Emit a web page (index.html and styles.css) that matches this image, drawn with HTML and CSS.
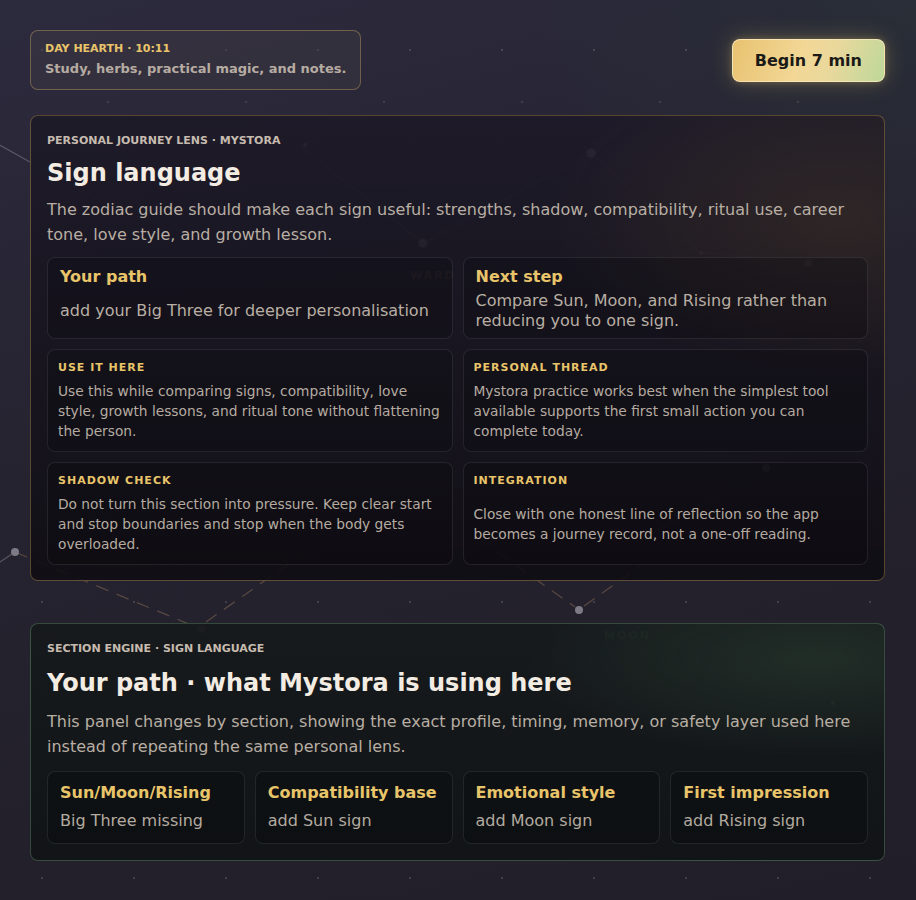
FILE: index.html
```html
<!DOCTYPE html>
<html lang="en">
<head>
<meta charset="utf-8">
<title>Mystora · Sign language</title>
<link rel="stylesheet" href="styles.css">
</head>
<body>
<div class="sky" aria-hidden="true">
  <svg class="sky-svg" width="916" height="900" viewBox="0 0 916 900">
    <g class="sky-lines">
      <line x1="-6" y1="142" x2="30" y2="162"/>
      <line class="faint" x1="30" y1="162" x2="120" y2="212"/>
      <line class="faint" x1="300" y1="146" x2="423" y2="243"/>
      <line class="faint" x1="423" y1="243" x2="591" y2="153"/>
      <line class="faint" x1="591" y1="153" x2="700" y2="252"/>
      <line class="faint" x1="700" y1="252" x2="808" y2="263"/>
      <line class="faint" x1="766" y1="468" x2="640" y2="540"/>
      <line x1="-6" y1="566" x2="15" y2="552"/>
      <line class="dash" x1="15" y1="552" x2="196" y2="627"/>
      <line class="dash" x1="206" y1="622" x2="300" y2="556"/>
      <line class="dash" x1="480" y1="540" x2="575" y2="607"/>
      <line class="dash" x1="584" y1="606" x2="640" y2="566"/>
    </g>
    <g class="sky-nodes">
      <circle cx="15" cy="552" r="4"/>
      <circle cx="201" cy="629" r="4" class="dim"/>
      <circle cx="579" cy="610" r="4"/>
      <circle cx="423" cy="243" r="4.5"/>
      <circle cx="591" cy="153" r="4.5"/>
      <circle cx="808" cy="263" r="4"/>
      <circle cx="766" cy="468" r="4"/>
      <circle cx="305" cy="145" r="2"/>
      <circle cx="701" cy="253" r="1.8" class="gold"/>
      <circle cx="833" cy="703" r="2" class="bright"/>
    </g>
    <text class="sky-word" x="410" y="279">WARD</text>
    <text class="sky-word sky-word-green" x="604" y="639">MOON</text>
  </svg>
</div>

<main class="page">
  <header class="topbar">
    <div class="hearth">
      <div class="hearth-label">DAY HEARTH · 10:11</div>
      <div class="hearth-text">Study, herbs, practical magic, and notes.</div>
    </div>
    <button class="begin" type="button">Begin 7 min</button>
  </header>

  <section class="panel panel-lens">
    <div class="eyebrow">PERSONAL JOURNEY LENS · MYSTORA</div>
    <h1 class="panel-title">Sign language</h1>
    <p class="panel-lead">The zodiac guide should make each sign useful: strengths, shadow, compatibility, ritual use, career tone, love style, and growth lesson.</p>

    <div class="grid-two">
      <div class="card card-big">
        <div class="card-title">Your path</div>
        <div class="card-value">add your Big Three for deeper personalisation</div>
      </div>
      <div class="card card-big">
        <div class="card-title">Next step</div>
        <div class="card-value">Compare Sun, Moon, and Rising rather than reducing you to one sign.</div>
      </div>
      <div class="card card-note">
        <div class="note-label">USE IT HERE</div>
        <div class="note-text">Use this while comparing signs, compatibility, love style, growth lessons, and ritual tone without flattening the person.</div>
      </div>
      <div class="card card-note">
        <div class="note-label">PERSONAL THREAD</div>
        <div class="note-text">Mystora practice works best when the simplest tool available supports the first small action you can complete today.</div>
      </div>
      <div class="card card-note">
        <div class="note-label">SHADOW CHECK</div>
        <div class="note-text">Do not turn this section into pressure. Keep clear start and stop boundaries and stop when the body gets overloaded.</div>
      </div>
      <div class="card card-note">
        <div class="note-label">INTEGRATION</div>
        <div class="note-text">Close with one honest line of reflection so the app becomes a journey record, not a one-off reading.</div>
      </div>
    </div>
  </section>

  <section class="panel panel-engine">
    <div class="eyebrow">SECTION ENGINE · SIGN LANGUAGE</div>
    <h2 class="panel-title">Your path · what Mystora is using here</h2>
    <p class="panel-lead">This panel changes by section, showing the exact profile, timing, memory, or safety layer used here instead of repeating the same personal lens.</p>

    <div class="grid-four">
      <div class="card card-small">
        <div class="card-title">Sun/Moon/Rising</div>
        <div class="small-value">Big Three missing</div>
      </div>
      <div class="card card-small">
        <div class="card-title">Compatibility base</div>
        <div class="small-value">add Sun sign</div>
      </div>
      <div class="card card-small">
        <div class="card-title">Emotional style</div>
        <div class="small-value">add Moon sign</div>
      </div>
      <div class="card card-small">
        <div class="card-title">First impression</div>
        <div class="small-value">add Rising sign</div>
      </div>
    </div>
  </section>
</main>
</body>
</html>
```

FILE: styles.css
```css
* {
  box-sizing: border-box;
}

html {
  min-height: 100%;
  background: #23212c;
}

body {
  margin: 0;
  min-height: 900px;
  position: relative;
  font-family: "DejaVu Sans", Verdana, sans-serif;
  color: #b9afa4;
  background:
    radial-gradient(circle, rgba(255, 255, 255, 0.13) 0, rgba(255, 255, 255, 0.13) 1px, transparent 1.6px) -4px 4px / 92px 92px,
    radial-gradient(circle, rgba(255, 255, 255, 0.10) 0, rgba(255, 255, 255, 0.10) 1px, transparent 1.6px) 39px 33px / 138px 138px,
    radial-gradient(ellipse 60% 40% at 100% 0%, rgba(40, 52, 56, 0.55), transparent 70%),
    linear-gradient(165deg, #2c2a3d 0%, #25232f 45%, #211e29 100%);
}

.sky {
  position: absolute;
  left: 0;
  top: 0;
  width: 916px;
  height: 900px;
  z-index: 0;
  pointer-events: none;
}

.sky-svg {
  display: block;
}

.sky-lines line {
  stroke: rgba(150, 140, 150, 0.45);
  stroke-width: 1.3;
}

.sky-lines line.faint {
  stroke: rgba(150, 140, 150, 0.22);
}

.sky-lines line.dash {
  stroke: rgba(140, 110, 85, 0.5);
  stroke-dasharray: 13 9;
}

.sky-nodes circle {
  fill: #7d7a86;
}

.sky-nodes circle.dim {
  fill: #4a4752;
}

.sky-nodes circle.gold {
  fill: #a6844c;
}

.sky-nodes circle.bright {
  fill: #8b8a8a;
}

.sky-word {
  font-family: "DejaVu Sans", sans-serif;
  font-weight: 700;
  font-size: 11px;
  letter-spacing: 2px;
  fill: #8a7652;
}

.sky-word-green {
  fill: #5e6c52;
}

.page {
  position: relative;
  z-index: 1;
  padding: 30px 31px 30px 30px;
}

/* Top bar */
.topbar {
  display: flex;
  justify-content: space-between;
  align-items: center;
  margin-bottom: 25px;
}

.hearth {
  border: 1px solid rgba(214, 176, 100, 0.38);
  border-radius: 8px;
  padding: 11px 14px;
  background: rgba(70, 62, 72, 0.35);
}

.hearth-label {
  font-size: 11px;
  line-height: 14px;
  font-weight: 700;
  color: #e8c46a;
}

.hearth-text {
  margin-top: 4px;
  font-size: 13px;
  line-height: 18px;
  font-weight: 700;
  color: #b6aca2;
}

.begin {
  font-family: "DejaVu Sans", Verdana, sans-serif;
  font-size: 16px;
  line-height: 19px;
  font-weight: 700;
  color: #1b1a17;
  padding: 11px 22px;
  border: 1px solid rgba(255, 238, 196, 0.7);
  border-radius: 8px;
  background: linear-gradient(110deg, #e8c270 0%, #f2d796 45%, #e9d89c 65%, #bdd89a 100%);
  box-shadow: 0 0 22px rgba(232, 196, 106, 0.28), 0 0 6px rgba(232, 196, 106, 0.25);
  cursor: pointer;
}

/* Panels */
.panel {
  border-radius: 8px;
  padding: 17px 16px 16px 16px;
}

.panel-lens {
  padding-bottom: 15px;
  border: 1px solid rgba(176, 138, 80, 0.45);
  background:
    radial-gradient(ellipse 45% 45% at 95% 22%, rgba(82, 62, 40, 0.36), transparent 75%),
    linear-gradient(180deg, rgba(29, 26, 40, 0.9) 0%, rgba(22, 19, 28, 0.91) 60%, rgba(16, 14, 20, 0.92) 100%);
  margin-bottom: 42px;
}

.panel-engine {
  border: 1px solid rgba(96, 140, 104, 0.45);
  background:
    radial-gradient(ellipse 45% 55% at 92% 15%, rgba(42, 62, 48, 0.55), transparent 75%),
    linear-gradient(180deg, rgba(22, 26, 28, 0.92) 0%, rgba(17, 20, 22, 0.93) 100%);
}

.eyebrow {
  font-size: 11px;
  line-height: 16px;
  font-weight: 700;
  color: #c6bbaf;
}

.panel-title {
  margin: 9px 0 0;
  font-size: 24px;
  line-height: 30px;
  font-weight: 700;
  color: #f3ece3;
}

.panel-engine .panel-title {
  margin-top: 11px;
}

.panel-lead {
  margin: 9px 0 0;
  font-size: 16px;
  line-height: 25px;
  color: #b8aea3;
}

.panel-engine .panel-lead {
  margin-top: 11px;
}

/* Card grids */
.grid-two {
  margin-top: 10px;
  display: grid;
  grid-template-columns: 1fr 1fr;
  gap: 10px;
}

.grid-four {
  margin-top: 12px;
  display: grid;
  grid-template-columns: repeat(4, 1fr);
  gap: 10px;
}

.card {
  border: 1px solid rgba(255, 255, 255, 0.09);
  border-radius: 8px;
  background: rgba(8, 6, 12, 0.28);
  display: flex;
  flex-direction: column;
}

.card-big {
  padding: 9px 12px 7px;
}

.card-title {
  font-size: 16px;
  line-height: 20px;
  font-weight: 700;
  color: #e8c46a;
}

.card-value {
  margin: auto 0;
  padding-top: 4px;
  font-size: 16px;
  line-height: 20px;
  color: #b8aea3;
}

.card-note {
  padding: 10px 10px 10px;
}

.note-label {
  font-size: 11px;
  line-height: 16px;
  font-weight: 700;
  letter-spacing: 1px;
  color: #e8c46a;
}

.note-text {
  margin: auto 0;
  padding-top: 5px;
  font-size: 13.76px;
  line-height: 20px;
  color: #b5aba1;
}

.card-small {
  padding: 11px 12px 10px;
  background: rgba(4, 6, 8, 0.3);
}

.small-value {
  margin-top: 6px;
  font-size: 16px;
  line-height: 24px;
  color: #b3aaa0;
}
```
